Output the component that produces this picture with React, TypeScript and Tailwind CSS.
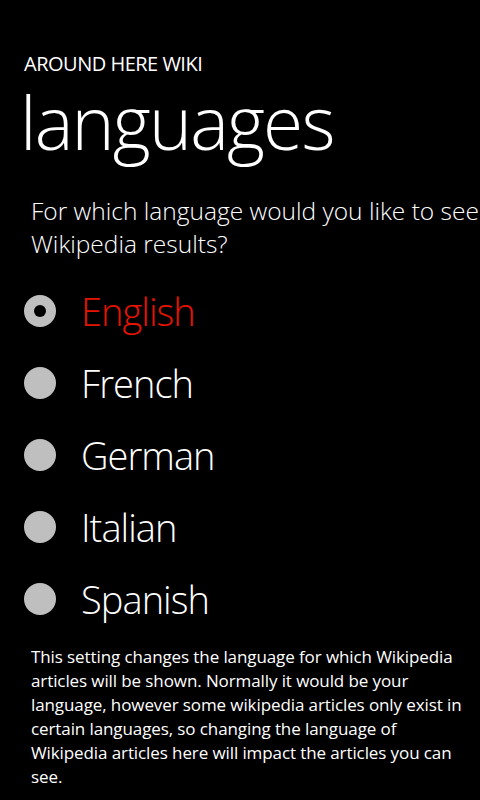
const languages = ["English", "French", "German", "Italian", "Spanish"];

function Radio({ checked }: { checked: boolean }) {
  return (
    <div className="w-8 h-8 rounded-full bg-[#bfbfbf] flex items-center justify-center shrink-0">
      {checked && <div className="w-3 h-3 rounded-full bg-black" />}
    </div>
  );
}

export default function App() {
  const selected = "English";
  return (
    <div className="w-[480px] h-[800px] bg-black text-white overflow-hidden font-['Open_Sans',sans-serif]">
      <div className="pt-[50px] px-6">
        <div className="text-[20px] leading-[28px] tracking-tight">AROUND HERE WIKI</div>
        <h1 className="mt-[8px] text-[73px] leading-[72px] font-light -ml-1 tracking-tight">languages</h1>
      </div>

      <div className="pl-[31px] mt-[36px] text-[24.5px] leading-[33px] font-light whitespace-nowrap">
        For which language would you like to see
        <br />
        Wikipedia results?
      </div>

      <div className="mt-[15px] flex flex-col">
        {languages.map((lang) => (
          <div key={lang} className="flex items-center h-[72px] pl-6 gap-[25px]">
            <Radio checked={lang === selected} />
            <span
              className={`text-[38px] font-light tracking-tight ${lang === selected ? "text-[#e51400]" : "text-white"}`}
            >
              {lang}
            </span>
          </div>
        ))}
      </div>

      <p className="pl-[31px] pr-2 mt-[10px] text-[17px] leading-[24px] tracking-[-0.1px]">
        This setting changes the language for which Wikipedia articles will be shown. Normally it would be your
        language, however some wikipedia articles only exist in certain languages, so changing the language of
        Wikipedia articles here will impact the articles you can see.
      </p>
    </div>
  );
}
